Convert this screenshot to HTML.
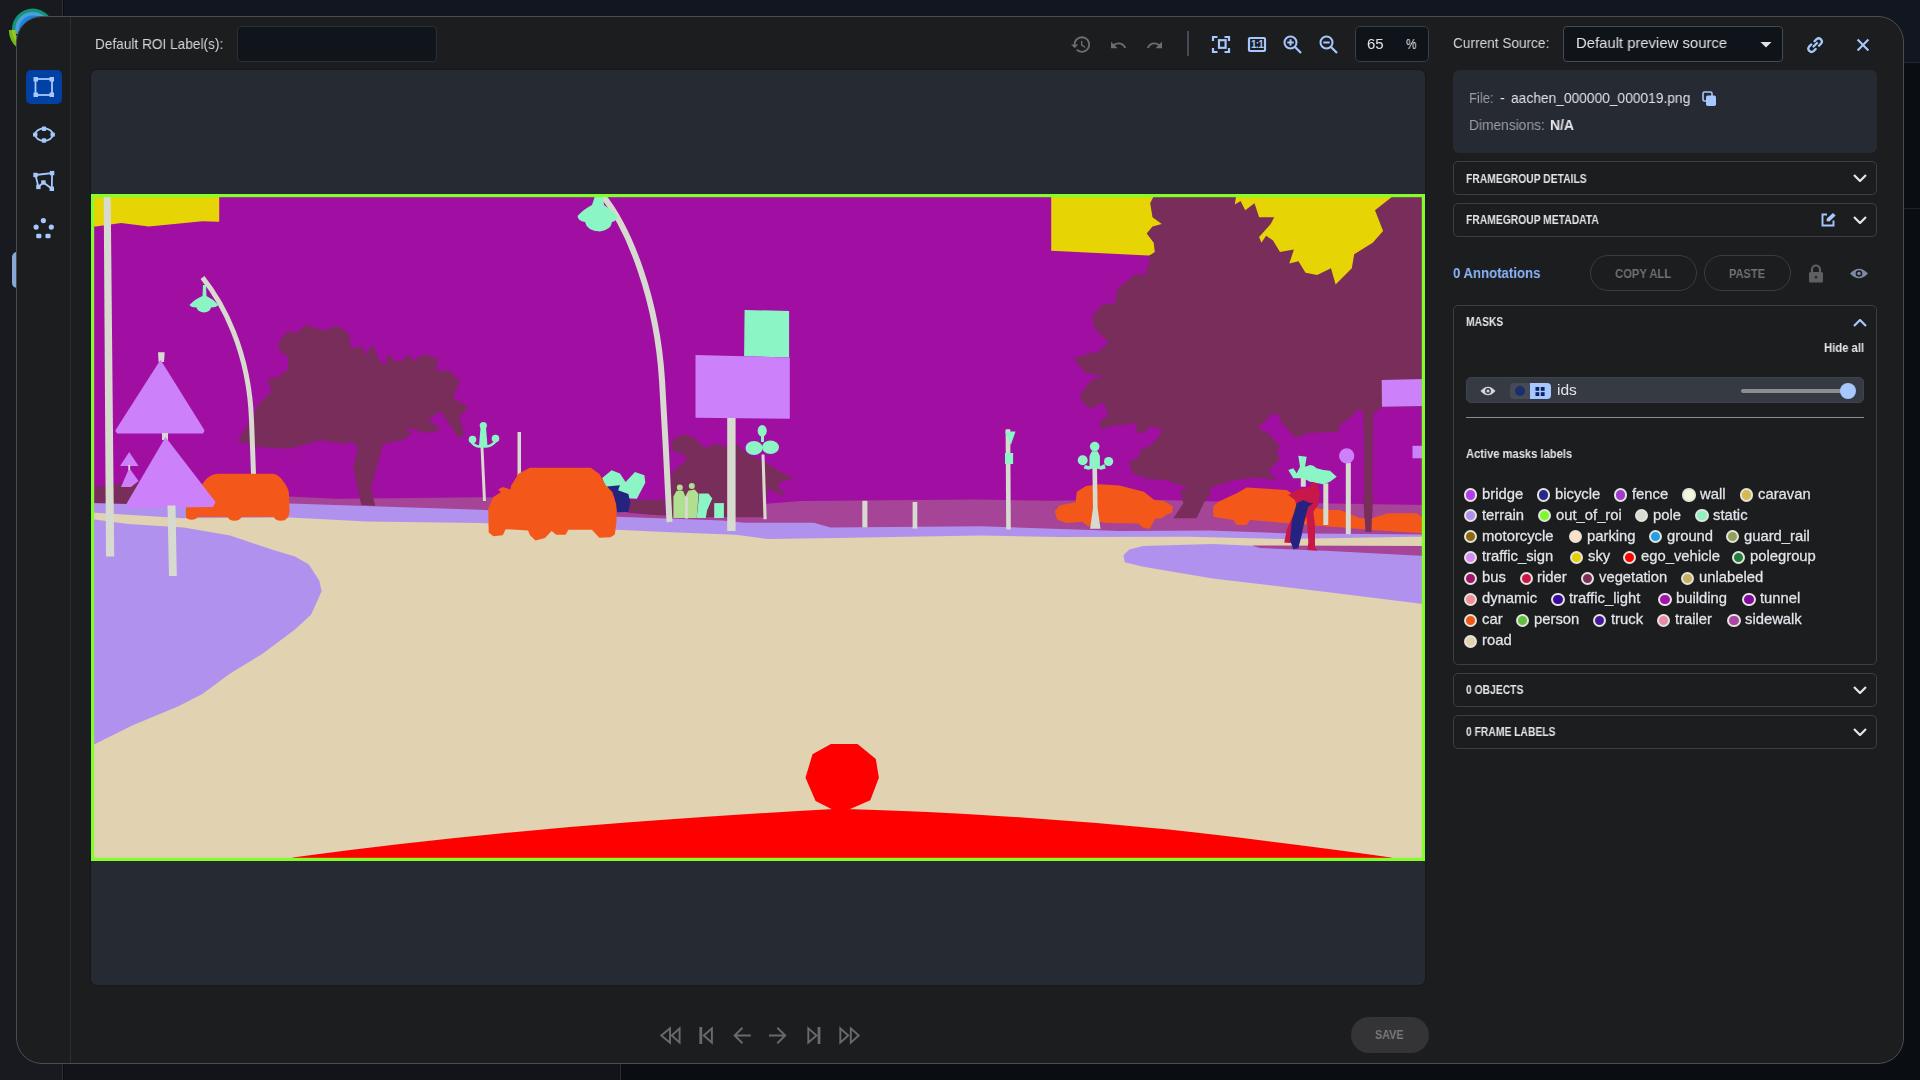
<!DOCTYPE html>
<html><head><meta charset="utf-8">
<style>
*{margin:0;padding:0;box-sizing:border-box}
html,body{width:1920px;height:1080px;overflow:hidden;background:#0a0d12;font-family:"Liberation Sans",sans-serif}
.abs{position:absolute}
#bgl{left:0;top:0;width:63px;height:1080px;background:#181a1f;border-right:1px solid #2a2d33}
#bgt{left:64px;top:0;width:1856px;height:63px;background:#121620;border-bottom:1px solid #23262d}
#bgb{left:64px;top:1064px;width:557px;height:16px;background:#121419;border-right:1px solid #2a2d33}
#bgr{left:1904px;top:208px;width:16px;height:1px;background:#1f2228}
#modal{left:16px;top:16px;width:1888px;height:1048px;background:#1c1d1f;border:1px solid #4a4c53;border-radius:26px;overflow:hidden}
.txt{white-space:nowrap;color:#d6d6d8;will-change:transform}
</style></head><body>
<div id="bgl" class="abs"></div>
<div id="bgt" class="abs"></div>
<div id="bgb" class="abs"></div>
<div id="bgr" class="abs"></div>
<svg class="abs" style="left:0;top:0" width="70" height="70" viewBox="0 0 70 70">
  <defs><clipPath id="lgtop"><rect x="0" y="0" width="70" height="34"/></clipPath></defs>
  <g clip-path="url(#lgtop)">
  <circle cx="32.8" cy="29.5" r="20.9" fill="#139478"/>
  <circle cx="32.8" cy="29.5" r="17.6" fill="#4aa0d8"/>
  <circle cx="32.8" cy="29.5" r="13.9" fill="#1a84e0"/>
  </g>
  <path d="M8.8 30 A24 24 0 0 0 16.7 47.3 L21 42.6 A17.6 17.6 0 0 1 15.2 30 Z" fill="#70ba1e"/>
  <path d="M11.9 30 A20.9 20.9 0 0 0 18.8 44.9 L21 42.6 A17.6 17.6 0 0 1 15.2 30 Z" fill="#9cc428"/>
</svg>
<div class="abs" style="left:12px;top:252px;width:6px;height:36px;background:#88a8d8;border-radius:5px 0 0 5px"></div>
<div id="modal" class="abs"></div>
<div class="abs" style="left:70px;top:17px;width:1px;height:1046px;background:#2c2e33"></div>
<div class="abs" style="left:26px;top:70px;width:36px;height:34px;background:#0041a3;border-radius:5px"></div>
<svg class="abs" style="left:26px;top:60px" width="36" height="200" viewBox="26 60 36 200">
<g fill="none" stroke="#a6c8ff" stroke-width="1.8">
<rect x="35.5" y="79" width="16.5" height="16"/>
<ellipse cx="44" cy="134.6" rx="8.8" ry="6.2"/>
<polyline points="35.5,175 52.1,173.1 51.8,188.8 43.4,182.5 38.4,186.9 35.5,175"/>
</g>
<g fill="#a6c8ff">
<rect x="33.5" y="77" width="4.5" height="4.5"/><rect x="49.5" y="77" width="4.5" height="4.5"/>
<rect x="33.5" y="92.5" width="4.5" height="4.5"/><rect x="49.5" y="92.5" width="4.5" height="4.5"/>
<rect x="41.8" y="126.5" width="4.4" height="4.4" rx="1"/><rect x="41.8" y="138.3" width="4.4" height="4.4" rx="1"/>
<rect x="33" y="132.4" width="4.4" height="4.4" rx="1"/><rect x="50.5" y="132.4" width="4.4" height="4.4" rx="1"/>
<rect x="33.3" y="172.8" width="4.4" height="4.4"/><rect x="49.9" y="170.9" width="4.4" height="4.4"/>
<rect x="49.6" y="186.6" width="4.4" height="4.4"/><rect x="41.2" y="180.3" width="4.4" height="4.4"/>
<rect x="36.2" y="184.7" width="4.4" height="4.4"/>
<circle cx="43.4" cy="220.6" r="2.6"/><circle cx="36.1" cy="227.1" r="2.6"/><circle cx="51.3" cy="227.1" r="2.6"/>
<rect x="36.2" y="233.7" width="5.2" height="4.6" rx="1.3"/><rect x="45.4" y="233.7" width="5.2" height="4.6" rx="1.3"/>
</g></svg>
<div class="abs txt" style="left:95.0px;top:36.0px;font-size:15px;line-height:15px;color:#d6d7da;font-weight:normal;transform:scaleX(0.91);transform-origin:0 0;">Default ROI Label(s):</div>
<div class="abs" style="left:237px;top:26px;width:200px;height:36px;background:#10141b;border:1px solid #2b2f37;border-radius:4px"></div>
<svg class="abs" style="left:1071px;top:35px" width="20" height="20" viewBox="1 3 22 19"><path fill="#6e6e70" d="M13 3c-4.97 0-9 4.03-9 9H1l3.89 3.89.07.14L9 12H6c0-3.87 3.13-7 7-7s7 3.13 7 7-3.13 7-7 7c-1.93 0-3.68-.79-4.94-2.06l-1.42 1.42C8.27 19.99 10.51 21 13 21c4.97 0 9-4.03 9-9s-4.03-9-9-9zm-1 5v5l4.28 2.54.72-1.21-3.5-2.08V8H12z"/></svg>
<svg class="abs" style="left:1110.5px;top:40.5px" width="15" height="8" viewBox="2 7 20.4 9"><path fill="#6e6e70" d="M12.5 8c-2.65 0-5.05.99-6.9 2.6L2 7v9h9l-3.62-3.62c1.39-1.16 3.16-1.88 5.12-1.88 3.54 0 6.55 2.31 7.6 5.5l2.37-.78C21.08 11.03 17.15 8 12.5 8z"/></svg>
<svg class="abs" style="left:1146.5px;top:40.5px" width="15" height="8" viewBox="1.54 7 20.46 9"><path fill="#6e6e70" d="M18.4 10.6C16.55 8.99 14.15 8 11.5 8c-4.65 0-8.58 3.03-9.96 7.22L3.9 16c1.05-3.19 4.05-5.5 7.6-5.5 1.95 0 3.73.72 5.12 1.88L13 16h9V7l-3.6 3.6z"/></svg>
<div class="abs" style="left:1187px;top:31px;width:2px;height:25px;background:#454b57"></div>
<svg class="abs" style="left:1210px;top:34px" width="22" height="21" viewBox="1210 34 22 21"><g fill="none" stroke="#a6c8ff" stroke-width="2.2">
<path d="M1213 41 V37 H1217.5"/><path d="M1224.5 37 H1229 V41"/><path d="M1229 48 V52 H1224.5"/><path d="M1217.5 52 H1213 V48"/>
<rect x="1219" y="40.2" width="6.6" height="7.6"/></g></svg>
<svg class="abs" style="left:1247px;top:36px" width="21" height="17" viewBox="1247 36 21 17"><rect x="1249" y="38" width="16" height="13" fill="none" stroke="#a6c8ff" stroke-width="2.2" rx="1"/>
<text x="1257" y="48.3" font-family="Liberation Sans" font-weight="bold" font-size="10" fill="#a6c8ff" text-anchor="middle" letter-spacing="-0.8">1:1</text></svg>
<svg class="abs" style="left:1280px;top:33px" width="22" height="22" viewBox="1280 33 22 22"><circle cx="1290.5" cy="42.5" r="6" fill="none" stroke="#a6c8ff" stroke-width="2"/><path d="M1294.8 46.8 L1301.0 53" stroke="#a6c8ff" stroke-width="2.2"/><path d="M1287.3 42.5 H1293.7" stroke="#a6c8ff" stroke-width="2"/><path d="M1290.5 39.3 V45.7" stroke="#a6c8ff" stroke-width="2"/></svg>
<svg class="abs" style="left:1316px;top:33px" width="22" height="22" viewBox="1316 33 22 22"><circle cx="1326.5" cy="42.5" r="6" fill="none" stroke="#a6c8ff" stroke-width="2"/><path d="M1330.8 46.8 L1337.0 53" stroke="#a6c8ff" stroke-width="2.2"/><path d="M1323.3 42.5 H1329.7" stroke="#a6c8ff" stroke-width="2"/></svg>
<div class="abs" style="left:1355px;top:26px;width:74px;height:36px;background:#0f131a;border:1px solid #3a3e46;border-radius:5px"></div>
<div class="abs txt" style="left:1366.5px;top:35.6px;font-size:15px;line-height:15px;color:#e2e3e6;font-weight:normal;">65</div>
<div class="abs txt" style="left:1405.5px;top:37.4px;font-size:14px;line-height:14px;color:#e2e3e6;font-weight:normal;transform:scaleX(0.85);transform-origin:0 0;">%</div>
<div class="abs txt" style="left:1453.0px;top:35.2px;font-size:15px;line-height:15px;color:#d6d7da;font-weight:normal;transform:scaleX(0.91);transform-origin:0 0;">Current Source:</div>
<div class="abs" style="left:1563px;top:26px;width:220px;height:36px;background:#0f131a;border:1px solid #474a52;border-radius:4px"></div>
<div class="abs txt" style="left:1575.5px;top:35.2px;font-size:15px;line-height:15px;color:#e2e3e6;font-weight:normal;transform:scaleX(0.99);transform-origin:0 0;">Default preview source</div>
<svg class="abs" style="left:1759px;top:41px" width="14" height="7" viewBox="0 0 14 7"><path d="M1.5 1 L12.5 1 L7 6.5 Z" fill="#e2e3e6"/></svg>
<svg class="abs" style="left:1805px;top:36px" width="20" height="18" viewBox="0 0 20 18"><g fill="none" stroke="#a6c8ff" stroke-width="2.3" stroke-linecap="round"><path d="M8.5 10.5 L12 7"/><path d="M9.5 5.2 L11.6 3.1 a3.2 3.2 0 0 1 4.5 4.5 L14 9.7"/><path d="M6.2 8.5 L4.1 10.6 a3.2 3.2 0 0 0 4.5 4.5 L10.7 13"/></g></svg>
<svg class="abs" style="left:1855px;top:37px" width="16" height="16" viewBox="0 0 16 16"><path d="M2.6 2.6 L13.4 13.4 M13.4 2.6 L2.6 13.4" stroke="#a6c8ff" stroke-width="2.1"/></svg>
<div class="abs" style="left:91px;top:70px;width:1334px;height:915px;background:#262a33;border-radius:6px;box-shadow:0 0 1px 1px #18191c"></div>
<div class="abs" style="left:1453px;top:70px;width:424px;height:83px;background:#262a33;border-radius:6px"></div>
<div class="abs txt" style="left:1469.0px;top:90.8px;font-size:14.5px;line-height:14.5px;color:#9c9ea3;font-weight:normal;transform:scaleX(0.9);transform-origin:0 0;">File:</div>
<div class="abs txt" style="left:1500.0px;top:90.8px;font-size:14.5px;line-height:14.5px;color:#e2e3e6;font-weight:normal;">-</div>
<div class="abs txt" style="left:1510.5px;top:90.8px;font-size:14.5px;line-height:14.5px;color:#e2e3e6;font-weight:normal;transform:scaleX(0.95);transform-origin:0 0;">aachen_000000_000019.png</div>
<svg class="abs" style="left:1701.5px;top:91px" width="15" height="16" viewBox="0 0 15 16"><rect x="1" y="1" width="9" height="9" rx="1.5" fill="none" stroke="#a6c8ff" stroke-width="1.6"/><rect x="4" y="4.5" width="10" height="10.5" rx="1.8" fill="#a6c8ff"/></svg>
<div class="abs txt" style="left:1469.0px;top:118.2px;font-size:14.5px;line-height:14.5px;color:#9c9ea3;font-weight:normal;transform:scaleX(0.95);transform-origin:0 0;">Dimensions:</div>
<div class="abs txt" style="left:1549.5px;top:118.2px;font-size:14.5px;line-height:14.5px;color:#e8e9ec;font-weight:bold;transform:scaleX(0.96);transform-origin:0 0;">N/A</div>
<div class="abs" style="left:1453px;top:161px;width:424px;height:34px;border:1px solid #3b3e45;border-radius:5px"></div>
<div class="abs txt" style="left:1466.0px;top:172.5px;font-size:12px;line-height:12px;color:#e4e5e8;font-weight:bold;transform:scaleX(0.86);transform-origin:0 0;">FRAMEGROUP DETAILS</div>
<svg class="abs" style="left:1853px;top:173.5px" width="14" height="8" viewBox="0 0 14 8"><path d="M1 1 L7 7 L13 1" fill="none" stroke="#e6e6e8" stroke-width="2.2"/></svg>
<div class="abs" style="left:1453px;top:203px;width:424px;height:34px;border:1px solid #3b3e45;border-radius:5px"></div>
<div class="abs txt" style="left:1466.0px;top:214.4px;font-size:12px;line-height:12px;color:#e4e5e8;font-weight:bold;transform:scaleX(0.86);transform-origin:0 0;">FRAMEGROUP METADATA</div>
<svg class="abs" style="left:1853px;top:215.5px" width="14" height="8" viewBox="0 0 14 8"><path d="M1 1 L7 7 L13 1" fill="none" stroke="#e6e6e8" stroke-width="2.2"/></svg>
<svg class="abs" style="left:1820px;top:212px" width="17" height="15" viewBox="0 0 17 15"><path d="M7 2.5 H2.5 V13.5 H13.5 V8.5" fill="none" stroke="#a6c8ff" stroke-width="1.9"/><path d="M6.5 9.3 L6.8 6.6 L13 0.9 L15.6 3.5 L9.4 9.6 Z" fill="#a6c8ff"/></svg>
<div class="abs txt" style="left:1453.0px;top:265.4px;font-size:15.5px;line-height:15.5px;color:#8ab4f8;font-weight:bold;transform:scaleX(0.85);transform-origin:0 0;">0 Annotations</div>
<div class="abs" style="left:1590px;top:255px;width:107px;height:36px;border:1px solid #3a3c41;border-radius:18px"></div>
<div class="abs txt" style="left:1615.0px;top:266.5px;font-size:13px;line-height:13px;color:#707174;font-weight:bold;transform:scaleX(0.865);transform-origin:0 0;">COPY ALL</div>
<div class="abs" style="left:1704px;top:255px;width:87px;height:36px;border:1px solid #3a3c41;border-radius:18px"></div>
<div class="abs txt" style="left:1728.7px;top:266.5px;font-size:13px;line-height:13px;color:#707174;font-weight:bold;transform:scaleX(0.85);transform-origin:0 0;">PASTE</div>
<svg class="abs" style="left:1808px;top:264px" width="16" height="19" viewBox="0 0 16 19"><path d="M4 8 V5.5 a4 4 0 0 1 8 0 V8" fill="none" stroke="#5f6064" stroke-width="2.2"/><rect x="1" y="8" width="14" height="10.5" rx="1.5" fill="#5f6064"/><circle cx="8" cy="13" r="1.5" fill="#2a2b2e"/></svg>
<svg class="abs" style="left:1849px;top:267px" width="20" height="13" viewBox="0 0 20 13"><path d="M1 6.5 Q10 -3 19 6.5 Q10 16 1 6.5 Z" fill="#7b8aa5"/><circle cx="10" cy="6.5" r="3.3" fill="#1c1d1f"/><circle cx="10" cy="6.5" r="1.8" fill="#7b8aa5"/></svg>
<div class="abs" style="left:1453px;top:305px;width:424px;height:360px;border:1px solid #3b3e45;border-radius:5px"></div>
<div class="abs txt" style="left:1466.0px;top:316.4px;font-size:12px;line-height:12px;color:#e4e5e8;font-weight:bold;transform:scaleX(0.86);transform-origin:0 0;">MASKS</div>
<svg class="abs" style="left:1853px;top:318.5px" width="14" height="8" viewBox="0 0 14 8"><path d="M1 7 L7 1 L13 7" fill="none" stroke="#a6c8ff" stroke-width="2.2"/></svg>
<div class="abs txt" style="left:1824.0px;top:342.3px;font-size:12px;line-height:12px;color:#e4e5e8;font-weight:bold;transform:scaleX(0.94);transform-origin:0 0;">Hide all</div>
<div class="abs" style="left:1466px;top:377px;width:398px;height:26px;background:#363a43;border-radius:5px;border:1px solid #3f434b"></div>
<svg class="abs" style="left:1480px;top:385px" width="16" height="12" viewBox="0 0 16 12"><path d="M0.5 6 Q8 -2.5 15.5 6 Q8 14.5 0.5 6 Z" fill="#d4d5d8"/><circle cx="8" cy="6" r="2.9" fill="#363a43"/><circle cx="8" cy="6" r="1.5" fill="#d4d5d8"/></svg>
<div class="abs" style="left:1510px;top:383px;width:41px;height:16px;background:#454a55;border-radius:4px"></div>
<div class="abs" style="left:1530px;top:383px;width:21px;height:16px;background:#a6c8ff;border-radius:0 4px 4px 0"></div>
<div class="abs" style="left:1514.8px;top:385.8px;width:10px;height:10px;background:#1a2e6e;border-radius:50%"></div>
<svg class="abs" style="left:1534px;top:386px" width="12" height="11" viewBox="0 0 12 11"><rect x="1.5" y="1" width="3.8" height="3.8" fill="#0b2363"/><rect x="6.8" y="1" width="3.8" height="3.8" fill="#0b2363"/><rect x="1.5" y="6.2" width="3.8" height="3.8" fill="#0b2363"/><rect x="6.8" y="6.2" width="3.8" height="3.8" fill="#0b2363"/></svg>
<div class="abs txt" style="left:1557.0px;top:382.0px;font-size:15.5px;line-height:15.5px;color:#e2e3e6;font-weight:normal;">ids</div>
<div class="abs" style="left:1741px;top:389px;width:107px;height:4px;background:#8c8e92;border-radius:2px"></div>
<div class="abs" style="left:1839.8px;top:382.8px;width:16px;height:16px;background:#a6c8ff;border-radius:50%"></div>
<div class="abs" style="left:1466px;top:417px;width:398px;height:1px;background:#8a8b8f"></div>
<div class="abs txt" style="left:1466.0px;top:448.2px;font-size:12px;line-height:12px;color:#e4e5e8;font-weight:bold;transform:scaleX(0.93);transform-origin:0 0;">Active masks labels</div>
<div class="abs" style="left:1464.2px;top:488.4px;width:13.2px;height:13.2px;border-radius:50%;background:#b43cf0;border:2px solid #e4e4dc"></div>
<div class="abs txt" style="left:1482.1px;top:486.8px;font-size:14.8px;line-height:14.8px;color:#e2e4ea;font-weight:normal;text-shadow:0 0 1px #000;-webkit-text-stroke:0.3px #e2e4ea;">bridge</div>
<div class="abs" style="left:1537.0px;top:488.4px;width:13.2px;height:13.2px;border-radius:50%;background:#28288c;border:2px solid #e4e4dc"></div>
<div class="abs txt" style="left:1554.9px;top:486.8px;font-size:14.8px;line-height:14.8px;color:#e2e4ea;font-weight:normal;text-shadow:0 0 1px #000;-webkit-text-stroke:0.3px #e2e4ea;">bicycle</div>
<div class="abs" style="left:1614.1px;top:488.4px;width:13.2px;height:13.2px;border-radius:50%;background:#a03ccc;border:2px solid #e4e4dc"></div>
<div class="abs txt" style="left:1632.0px;top:486.8px;font-size:14.8px;line-height:14.8px;color:#e2e4ea;font-weight:normal;text-shadow:0 0 1px #000;-webkit-text-stroke:0.3px #e2e4ea;">fence</div>
<div class="abs" style="left:1682.4px;top:488.4px;width:13.2px;height:13.2px;border-radius:50%;background:#f2f8da;border:2px solid #e4e4dc"></div>
<div class="abs txt" style="left:1700.3px;top:486.8px;font-size:14.8px;line-height:14.8px;color:#e2e4ea;font-weight:normal;text-shadow:0 0 1px #000;-webkit-text-stroke:0.3px #e2e4ea;">wall</div>
<div class="abs" style="left:1740.2px;top:488.4px;width:13.2px;height:13.2px;border-radius:50%;background:#d8b850;border:2px solid #e4e4dc"></div>
<div class="abs txt" style="left:1758.1px;top:486.8px;font-size:14.8px;line-height:14.8px;color:#e2e4ea;font-weight:normal;text-shadow:0 0 1px #000;-webkit-text-stroke:0.3px #e2e4ea;">caravan</div>
<div class="abs" style="left:1464.2px;top:509.3px;width:13.2px;height:13.2px;border-radius:50%;background:#b090ee;border:2px solid #e4e4dc"></div>
<div class="abs txt" style="left:1482.1px;top:507.7px;font-size:14.8px;line-height:14.8px;color:#e2e4ea;font-weight:normal;text-shadow:0 0 1px #000;-webkit-text-stroke:0.3px #e2e4ea;">terrain</div>
<div class="abs" style="left:1538.1px;top:509.3px;width:13.2px;height:13.2px;border-radius:50%;background:#7cf82c;border:2px solid #e4e4dc"></div>
<div class="abs txt" style="left:1556.0px;top:507.7px;font-size:14.8px;line-height:14.8px;color:#e2e4ea;font-weight:normal;text-shadow:0 0 1px #000;-webkit-text-stroke:0.3px #e2e4ea;">out_of_roi</div>
<div class="abs" style="left:1635.3px;top:509.3px;width:13.2px;height:13.2px;border-radius:50%;background:#d8dcd2;border:2px solid #e4e4dc"></div>
<div class="abs txt" style="left:1653.2px;top:507.7px;font-size:14.8px;line-height:14.8px;color:#e2e4ea;font-weight:normal;text-shadow:0 0 1px #000;-webkit-text-stroke:0.3px #e2e4ea;">pole</div>
<div class="abs" style="left:1695.4px;top:509.3px;width:13.2px;height:13.2px;border-radius:50%;background:#8ef2c0;border:2px solid #e4e4dc"></div>
<div class="abs txt" style="left:1713.3px;top:507.7px;font-size:14.8px;line-height:14.8px;color:#e2e4ea;font-weight:normal;text-shadow:0 0 1px #000;-webkit-text-stroke:0.3px #e2e4ea;">static</div>
<div class="abs" style="left:1464.2px;top:530.1px;width:13.2px;height:13.2px;border-radius:50%;background:#8c6810;border:2px solid #e4e4dc"></div>
<div class="abs txt" style="left:1482.1px;top:528.5px;font-size:14.8px;line-height:14.8px;color:#e2e4ea;font-weight:normal;text-shadow:0 0 1px #000;-webkit-text-stroke:0.3px #e2e4ea;">motorcycle</div>
<div class="abs" style="left:1569.3px;top:530.1px;width:13.2px;height:13.2px;border-radius:50%;background:#ffe0c4;border:2px solid #e4e4dc"></div>
<div class="abs txt" style="left:1587.2px;top:528.5px;font-size:14.8px;line-height:14.8px;color:#e2e4ea;font-weight:normal;text-shadow:0 0 1px #000;-webkit-text-stroke:0.3px #e2e4ea;">parking</div>
<div class="abs" style="left:1649.0px;top:530.1px;width:13.2px;height:13.2px;border-radius:50%;background:#209ee8;border:2px solid #e4e4dc"></div>
<div class="abs txt" style="left:1666.9px;top:528.5px;font-size:14.8px;line-height:14.8px;color:#e2e4ea;font-weight:normal;text-shadow:0 0 1px #000;-webkit-text-stroke:0.3px #e2e4ea;">ground</div>
<div class="abs" style="left:1726.3px;top:530.1px;width:13.2px;height:13.2px;border-radius:50%;background:#8ea25a;border:2px solid #e4e4dc"></div>
<div class="abs txt" style="left:1744.2px;top:528.5px;font-size:14.8px;line-height:14.8px;color:#e2e4ea;font-weight:normal;text-shadow:0 0 1px #000;-webkit-text-stroke:0.3px #e2e4ea;">guard_rail</div>
<div class="abs" style="left:1464.2px;top:550.9px;width:13.2px;height:13.2px;border-radius:50%;background:#d38cf8;border:2px solid #e4e4dc"></div>
<div class="abs txt" style="left:1482.1px;top:549.3px;font-size:14.8px;line-height:14.8px;color:#e2e4ea;font-weight:normal;text-shadow:0 0 1px #000;-webkit-text-stroke:0.3px #e2e4ea;">traffic_sign</div>
<div class="abs" style="left:1570.2px;top:550.9px;width:13.2px;height:13.2px;border-radius:50%;background:#e6d000;border:2px solid #e4e4dc"></div>
<div class="abs txt" style="left:1588.1px;top:549.3px;font-size:14.8px;line-height:14.8px;color:#e2e4ea;font-weight:normal;text-shadow:0 0 1px #000;-webkit-text-stroke:0.3px #e2e4ea;">sky</div>
<div class="abs" style="left:1623.0px;top:550.9px;width:13.2px;height:13.2px;border-radius:50%;background:#ff0000;border:2px solid #e4e4dc"></div>
<div class="abs txt" style="left:1640.9px;top:549.3px;font-size:14.8px;line-height:14.8px;color:#e2e4ea;font-weight:normal;text-shadow:0 0 1px #000;-webkit-text-stroke:0.3px #e2e4ea;">ego_vehicle</div>
<div class="abs" style="left:1732.3px;top:550.9px;width:13.2px;height:13.2px;border-radius:50%;background:#1e7e3a;border:2px solid #e4e4dc"></div>
<div class="abs txt" style="left:1750.2px;top:549.3px;font-size:14.8px;line-height:14.8px;color:#e2e4ea;font-weight:normal;text-shadow:0 0 1px #000;-webkit-text-stroke:0.3px #e2e4ea;">polegroup</div>
<div class="abs" style="left:1464.2px;top:571.9px;width:13.2px;height:13.2px;border-radius:50%;background:#a0146e;border:2px solid #e4e4dc"></div>
<div class="abs txt" style="left:1482.1px;top:570.3px;font-size:14.8px;line-height:14.8px;color:#e2e4ea;font-weight:normal;text-shadow:0 0 1px #000;-webkit-text-stroke:0.3px #e2e4ea;">bus</div>
<div class="abs" style="left:1519.5px;top:571.9px;width:13.2px;height:13.2px;border-radius:50%;background:#cc164a;border:2px solid #e4e4dc"></div>
<div class="abs txt" style="left:1537.4px;top:570.3px;font-size:14.8px;line-height:14.8px;color:#e2e4ea;font-weight:normal;text-shadow:0 0 1px #000;-webkit-text-stroke:0.3px #e2e4ea;">rider</div>
<div class="abs" style="left:1581.1px;top:571.9px;width:13.2px;height:13.2px;border-radius:50%;background:#7c3058;border:2px solid #e4e4dc"></div>
<div class="abs txt" style="left:1599.0px;top:570.3px;font-size:14.8px;line-height:14.8px;color:#e2e4ea;font-weight:normal;text-shadow:0 0 1px #000;-webkit-text-stroke:0.3px #e2e4ea;">vegetation</div>
<div class="abs" style="left:1680.8px;top:571.9px;width:13.2px;height:13.2px;border-radius:50%;background:#c8ae5e;border:2px solid #e4e4dc"></div>
<div class="abs txt" style="left:1698.7px;top:570.3px;font-size:14.8px;line-height:14.8px;color:#e2e4ea;font-weight:normal;text-shadow:0 0 1px #000;-webkit-text-stroke:0.3px #e2e4ea;">unlabeled</div>
<div class="abs" style="left:1464.2px;top:592.9px;width:13.2px;height:13.2px;border-radius:50%;background:#f48c9a;border:2px solid #e4e4dc"></div>
<div class="abs txt" style="left:1482.1px;top:591.3px;font-size:14.8px;line-height:14.8px;color:#e2e4ea;font-weight:normal;text-shadow:0 0 1px #000;-webkit-text-stroke:0.3px #e2e4ea;">dynamic</div>
<div class="abs" style="left:1551.4px;top:592.9px;width:13.2px;height:13.2px;border-radius:50%;background:#3a0aa0;border:2px solid #e4e4dc"></div>
<div class="abs txt" style="left:1569.3px;top:591.3px;font-size:14.8px;line-height:14.8px;color:#e2e4ea;font-weight:normal;text-shadow:0 0 1px #000;-webkit-text-stroke:0.3px #e2e4ea;">traffic_light</div>
<div class="abs" style="left:1658.4px;top:592.9px;width:13.2px;height:13.2px;border-radius:50%;background:#a412b0;border:2px solid #e4e4dc"></div>
<div class="abs txt" style="left:1676.3px;top:591.3px;font-size:14.8px;line-height:14.8px;color:#e2e4ea;font-weight:normal;text-shadow:0 0 1px #000;-webkit-text-stroke:0.3px #e2e4ea;">building</div>
<div class="abs" style="left:1742.4px;top:592.9px;width:13.2px;height:13.2px;border-radius:50%;background:#800aa0;border:2px solid #e4e4dc"></div>
<div class="abs txt" style="left:1760.3px;top:591.3px;font-size:14.8px;line-height:14.8px;color:#e2e4ea;font-weight:normal;text-shadow:0 0 1px #000;-webkit-text-stroke:0.3px #e2e4ea;">tunnel</div>
<div class="abs" style="left:1464.2px;top:614.0px;width:13.2px;height:13.2px;border-radius:50%;background:#f05614;border:2px solid #e4e4dc"></div>
<div class="abs txt" style="left:1482.1px;top:612.4px;font-size:14.8px;line-height:14.8px;color:#e2e4ea;font-weight:normal;text-shadow:0 0 1px #000;-webkit-text-stroke:0.3px #e2e4ea;">car</div>
<div class="abs" style="left:1516.2px;top:614.0px;width:13.2px;height:13.2px;border-radius:50%;background:#62c040;border:2px solid #e4e4dc"></div>
<div class="abs txt" style="left:1534.1px;top:612.4px;font-size:14.8px;line-height:14.8px;color:#e2e4ea;font-weight:normal;text-shadow:0 0 1px #000;-webkit-text-stroke:0.3px #e2e4ea;">person</div>
<div class="abs" style="left:1593.0px;top:614.0px;width:13.2px;height:13.2px;border-radius:50%;background:#46189e;border:2px solid #e4e4dc"></div>
<div class="abs txt" style="left:1610.9px;top:612.4px;font-size:14.8px;line-height:14.8px;color:#e2e4ea;font-weight:normal;text-shadow:0 0 1px #000;-webkit-text-stroke:0.3px #e2e4ea;">truck</div>
<div class="abs" style="left:1657.3px;top:614.0px;width:13.2px;height:13.2px;border-radius:50%;background:#e88aa8;border:2px solid #e4e4dc"></div>
<div class="abs txt" style="left:1675.2px;top:612.4px;font-size:14.8px;line-height:14.8px;color:#e2e4ea;font-weight:normal;text-shadow:0 0 1px #000;-webkit-text-stroke:0.3px #e2e4ea;">trailer</div>
<div class="abs" style="left:1727.4px;top:614.0px;width:13.2px;height:13.2px;border-radius:50%;background:#ae44a4;border:2px solid #e4e4dc"></div>
<div class="abs txt" style="left:1745.3px;top:612.4px;font-size:14.8px;line-height:14.8px;color:#e2e4ea;font-weight:normal;text-shadow:0 0 1px #000;-webkit-text-stroke:0.3px #e2e4ea;">sidewalk</div>
<div class="abs" style="left:1464.2px;top:634.7px;width:13.2px;height:13.2px;border-radius:50%;background:#e2d2b0;border:2px solid #e4e4dc"></div>
<div class="abs txt" style="left:1482.1px;top:633.1px;font-size:14.8px;line-height:14.8px;color:#e2e4ea;font-weight:normal;text-shadow:0 0 1px #000;-webkit-text-stroke:0.3px #e2e4ea;">road</div>
<div class="abs" style="left:1453px;top:673px;width:424px;height:34px;border:1px solid #3b3e45;border-radius:5px"></div>
<div class="abs txt" style="left:1466.0px;top:684.3px;font-size:12px;line-height:12px;color:#e4e5e8;font-weight:bold;transform:scaleX(0.86);transform-origin:0 0;">0 OBJECTS</div>
<svg class="abs" style="left:1853px;top:686px" width="14" height="8" viewBox="0 0 14 8"><path d="M1 1 L7 7 L13 1" fill="none" stroke="#e6e6e8" stroke-width="2.2"/></svg>
<div class="abs" style="left:1453px;top:715px;width:424px;height:34px;border:1px solid #3b3e45;border-radius:5px"></div>
<div class="abs txt" style="left:1466.0px;top:726.3px;font-size:12px;line-height:12px;color:#e4e5e8;font-weight:bold;transform:scaleX(0.86);transform-origin:0 0;">0 FRAME LABELS</div>
<svg class="abs" style="left:1853px;top:728px" width="14" height="8" viewBox="0 0 14 8"><path d="M1 1 L7 7 L13 1" fill="none" stroke="#e6e6e8" stroke-width="2.2"/></svg>
<svg class="abs" style="left:650px;top:1020px" width="220" height="32" viewBox="650 1020 220 32"><g fill="none" stroke="#6a6a6c" stroke-width="1.9" stroke-linejoin="miter">
<path d="M661.3 1035.5 L670 1028.3 V1042.7 Z"/><path d="M671.8 1035.5 L679.6 1028.3 V1042.7 Z"/>
<path d="M703.8 1035.5 L711.9 1028.3 V1042.7 Z"/>
<path d="M750.8 1035.5 H735 M742.5 1027.8 L734.6 1035.5 L742.5 1043.2"/>
<path d="M769 1035.5 H784.8 M777.3 1027.8 L785.2 1035.5 L777.3 1043.2"/>
<path d="M816.4 1035.5 L808.3 1028.3 V1042.7 Z"/>
<path d="M848.2 1035.5 L840.3 1028.3 V1042.7 Z"/><path d="M858.7 1035.5 L850.8 1028.3 V1042.7 Z"/>
</g>
<rect x="699.4" y="1027" width="2.8" height="17" fill="#6a6a6c"/><rect x="817.6" y="1027" width="2.8" height="17" fill="#6a6a6c"/></svg>
<div class="abs" style="left:1351px;top:1017px;width:78px;height:36px;background:#343436;border-radius:18px"></div>
<div class="abs txt" style="left:1374.5px;top:1028.3px;font-size:13px;line-height:13px;color:#7a7a7c;font-weight:bold;transform:scaleX(0.83);transform-origin:0 0;">SAVE</div>
<svg class="abs" style="left:0;top:0" width="1920" height="1080" viewBox="0 0 1920 1080"><defs><clipPath id="imgclip"><rect x="91" y="194" width="1334" height="667"/></clipPath></defs><g clip-path="url(#imgclip)">
<rect x="91" y="194" width="1334" height="667" fill="#a10ea2"/>
<polygon points="91.0,194.0 219.2,194.0 219.2,221.8 202.3,221.3 148.9,226.4 121.1,223.0 95.6,226.4 91.0,226.4" fill="#e6d405"/>
<polygon points="1051.2,194.0 1166.4,194.0 1166.4,247.3 1157.1,255.4 1147.9,255.4 1051.2,250.8" fill="#e6d405"/>
<polygon points="1154.8,194.0 1426.0,194.0 1426.0,379.4 1421.7,406.7 1381.7,406.7 1376.7,411.7 1373.3,413.3 1371.7,528.3 1365.0,530.0 1363.3,413.3 1361.7,410.8 1356.7,410.0 1353.3,415.0 1340.0,425.0 1338.3,431.7 1306.7,433.3 1296.7,438.3 1281.7,423.3 1280.0,415.8 1273.3,413.3 1258.3,427.5 1270.0,435.0 1280.0,446.7 1276.7,451.7 1280.0,458.3 1268.3,471.7 1276.7,480.0 1258.3,477.5 1233.3,480.0 1210.0,488.3 1210.0,495.2 1205.3,499.9 1197.2,518.4 1172.8,517.2 1177.5,514.9 1183.3,503.3 1185.6,487.1 1165.9,480.2 1148.5,479.0 1132.3,473.2 1128.9,461.7 1138.1,458.2 1140.4,450.1 1150.9,445.5 1160.1,435.0 1161.3,428.1 1148.5,426.9 1145.1,432.7 1137.0,432.7 1135.8,423.5 1112.7,425.8 1101.1,429.3 1099.9,420.0 1108.5,416.5 1103.8,402.6 1089.9,408.4 1080.7,400.3 1080.7,393.3 1092.3,379.4 1103.8,377.1 1085.3,372.5 1073.7,358.6 1087.6,353.9 1099.2,351.6 1108.5,342.3 1094.6,328.4 1092.3,316.8 1101.5,305.3 1115.4,302.9 1116.6,291.3 1120.1,286.7 1125.9,282.1 1134.0,275.1 1147.9,274.0 1145.6,268.2 1150.2,263.5 1147.9,256.6 1154.8,251.9 1153.7,242.7 1146.7,233.4 1152.5,226.4 1161.8,224.1 1152.5,217.2 1150.2,203.3" fill="#782d5a"/>
<polygon points="1235.9,194.0 1235.9,197.5 1234.8,204.4 1240.6,201.0 1245.2,210.2 1254.5,203.3 1259.1,217.2 1274.2,217.2 1270.7,224.1 1259.1,236.9 1261.4,242.7 1266.1,235.7 1273.0,240.4 1280.0,251.9 1293.9,249.6 1289.3,263.5 1298.5,261.2 1305.5,272.8 1317.1,275.1 1331.0,268.2 1335.6,284.4 1351.8,268.2 1354.2,254.3 1372.7,242.7 1383.1,231.1 1375.0,210.2 1391.2,197.5 1393.6,194.0" fill="#e6d405"/>
<polygon points="257.9,404.9 271.8,391.0 267.1,379.4 278.7,377.1 283.4,372.5 288.0,370.1 288.0,356.2 279.9,351.6 278.7,342.3 288.0,330.7 295.0,333.1 299.6,330.7 301.9,328.4 305.4,325.0 325.1,330.7 335.5,326.1 340.2,327.3 349.4,334.2 350.6,348.1 363.3,347.0 364.5,356.2 372.6,344.7 379.6,360.9 385.3,365.5 387.7,353.9 394.6,360.9 402.7,360.9 408.5,353.9 413.2,360.9 424.8,353.9 438.7,359.7 435.2,370.1 450.2,371.3 459.5,381.7 452.6,398.0 468.8,407.2 459.5,416.5 464.2,435.0 458.1,437.8 440.9,411.2 428.4,419.1 440.9,430.0 426.9,433.1 405.0,426.9 411.2,433.1 405.0,439.4 383.1,444.1 370.6,489.4 375.3,505.8 361.2,505.0 353.4,467.5 358.1,447.2 351.9,441.7 344.1,444.1 320.6,440.2 289.4,448.8 261.2,447.2 237.8,440.9 245.6,428.4 253.4,415.9" fill="#782d5a"/>
<polygon points="91.0,503.0 200.0,500.0 289.0,496.4 336.0,498.8 414.0,498.0 480.0,497.2 600.0,498.0 629.0,513.0 663.0,515.0 700.0,518.0 766.7,503.7 800.4,501.1 976.4,499.6 1050.5,500.8 1143.2,499.6 1236.0,502.0 1425.0,505.0 1425.0,861.0 91.0,861.0" fill="#a64497"/>
<polygon points="670.8,449.3 673.4,438.9 683.7,434.4 694.1,437.6 704.5,448.0 716.1,444.1 725.2,446.7 736.9,444.1 747.3,454.5 761.5,459.6 777.1,470.0 793.9,478.4 784.9,480.4 777.1,484.3 785.5,497.2 768.0,488.2 764.1,517.3 670.8,517.3 670.8,472.6 674.7,472.6 675.9,467.4 682.4,464.8 687.6,457.1" fill="#782d5a"/>
<polygon points="358.0,490.0 371.0,490.0 375.3,505.8 361.3,505.0" fill="#782d5a"/>
<polygon points="1173.4,518.2 1196.6,518.2 1205.2,499.9 1210.0,495.2 1210.0,490.0 1180.0,490.0 1183.3,503.3" fill="#782d5a"/>
<polygon points="1363.3,495.0 1373.0,495.0 1371.7,528.3 1365.0,530.0" fill="#782d5a"/>
<polygon points="94.5,486.9 114.2,484.6 137.4,481.1 137.4,505.4 94.5,505.4" fill="#782d5a"/>
<polygon points="629.4,500.6 650.0,499.7 665.0,499.5 665.0,515.6 650.0,514.7 629.4,511.9" fill="#782d5a"/>
<polygon points="91.0,503.1 183.7,505.4 289.4,503.4 480.0,509.7 616.3,516.7 722.6,520.6 744.6,522.8 814.1,522.8 830.3,527.4 981.0,526.3 1120.1,530.9 1210.0,530.5 1282.3,533.2 1425.0,534.4 1425.0,861.0 91.0,861.0" fill="#b092ee"/>
<polygon points="91.0,512.4 183.7,518.2 289.4,517.5 367.5,521.4 480.0,523.0 616.3,529.7 670.8,532.3 735.6,534.8 767.8,539.0 837.3,537.9 906.8,536.7 981.0,535.5 1059.4,536.9 1189.6,536.7 1282.3,539.0 1414.4,536.7 1425.0,536.7 1425.0,861.0 91.0,861.0" fill="#e1d2b1"/>
<polygon points="91.0,519.0 128.1,524.0 183.7,527.4 230.1,535.5 271.8,549.5 295.0,556.4 308.9,564.5 319.3,580.7 321.6,591.2 311.2,614.4 295.0,629.4 262.5,653.8 230.1,673.5 202.3,694.1 177.9,706.5 132.7,725.3 91.0,746.0" fill="#b092ee"/>
<polygon points="1123.5,555.3 1129.3,549.5 1143.2,546.0 1212.8,544.1 1259.1,546.0 1421.4,555.3 1426.0,555.3 1426.0,604.4 1328.7,592.3 1212.8,578.4 1143.2,566.8 1124.7,562.2" fill="#b092ee"/>
<polygon points="1252.0,545.5 1425.0,546.0 1425.0,556.0 1330.0,551.0 1260.0,548.0" fill="#a64497"/>
<polygon points="103.7,197.0 110.7,197.0 114.2,556.4 106.0,556.4" fill="#d7dacf"/>
<path d="M202.5,277.5 C222,302 249,350 251.5,420 L253.5,474" fill="none" stroke="#d7dacf" stroke-width="5"/>
<path d="M603,196 C630,230 657,300 662,380 C665,430 667,470 669.5,522" fill="none" stroke="#d7dacf" stroke-width="6"/>
<path d="M203,285 L206,285 L206.5,296 Q213,299 218.5,305 Q216,307.5 211,307.5 Q210,312 204,312.5 Q198,312 196.5,307.5 Q191,307.5 189.5,305 Q195,299 202.5,296 Z" fill="#8cf5c6"/>
<path d="M595,196 L603,196 L604,205 Q612,210 617.5,216 Q617,221 612,222 Q611,230 600,231.5 Q587,231 585,222 Q578,221 577.5,216 Q584,209 592,205 Z" fill="#8cf5c6"/>
<polygon points="744.6,309.9 789.1,311.0 789.1,357.4 744.1,356.2" fill="#8cf5c6"/>
<polygon points="695.5,355.1 789.8,357.4 789.8,418.8 695.5,417.7" fill="#cc80fa"/>
<polygon points="727.2,418.0 735.6,418.0 735.6,531.0 727.2,531.0" fill="#d7dacf"/>
<polygon points="761.5,454.5 764.5,454.5 766.7,519.3 763.5,519.3" fill="#d7dacf"/>
<ellipse cx="762.2" cy="430.8" rx="4.6" ry="5.8" fill="#8cf5c6"/><rect x="761" y="434" width="3" height="8" fill="#8cf5c6"/><ellipse cx="754" cy="448" rx="8.5" ry="7" fill="#8cf5c6"/><ellipse cx="770.5" cy="447.3" rx="8.5" ry="6.8" fill="#8cf5c6"/>
<polygon points="158.0,352.3 164.7,352.3 164.0,362.0 158.6,362.0" fill="#d7dacf"/>
<polygon points="160.5,359.7 204.6,430.6 203.0,433.5 117.0,433.5 115.3,430.6" fill="#cc80fa"/>
<polygon points="162.0,433.0 168.0,433.0 168.0,440.0 162.0,440.0" fill="#d7dacf"/>
<path d="M185.9,505.5 L204.4,481.2 Q210,474 218.3,473.8 L273.9,473.8 Q280,476 283.1,481.2 Q288,487 288.9,492.8 L289.6,511.3 Q289,520.8 281,520.8 Q275,520.6 273.9,517.1 L241.5,517.1 Q240,520.8 234.5,520.8 Q229,520.8 227.6,517.1 L197.5,517.1 Q196,519.8 191.7,519.8 Q187,519.6 185.9,517.1 Z" fill="#f3581a"/>
<polygon points="165.5,437.0 215.5,502.0 213.0,507.0 128.0,508.0 125.8,505.0" fill="#cc80fa"/>
<polygon points="167.5,505.4 175.5,505.4 176.8,576.1 169.0,576.1" fill="#d7dacf"/>
<polygon points="129.2,452.1 138.5,466.0 120.0,466.0" fill="#cc80fa"/>
<polygon points="129.2,468.0 138.5,481.0 131.0,486.9 121.0,486.9" fill="#cc80fa"/>
<polygon points="128.3,465.0 130.1,465.0 130.1,470.0 128.3,470.0" fill="#d7dacf"/>
<polygon points="480.4,444.0 483.3,444.0 486.0,501.0 483.0,501.0" fill="#d7dacf"/>
<circle cx="483.3" cy="425.5" r="3.6" fill="#8cf5c6"/>
<circle cx="472.5" cy="439.5" r="3.8" fill="#8cf5c6"/>
<circle cx="495.5" cy="438.5" r="3.8" fill="#8cf5c6"/>
<polygon points="480.5,428.0 486.0,428.0 487.5,446.0 479.0,446.0" fill="#8cf5c6"/>
<path d="M471.5,442 Q476,448 483,446 Q490,448 496,441" fill="none" stroke="#8cf5c6" stroke-width="2.6"/>
<polygon points="517.5,432.0 521.0,432.0 521.0,476.0 517.5,476.0" fill="#d7dacf"/>
<polygon points="602.2,478.1 611.6,470.2 620.0,473.4 625.6,481.9 635.0,472.0 644.4,475.3 645.3,482.8 636.9,498.8 620.0,498.0 607.0,490.0" fill="#8cf5c6"/>
<polygon points="606.9,486.6 620.0,485.2 618.1,490.3 628.4,494.1 630.3,502.5 628.4,511.9 617.2,512.3 614.4,496.9" fill="#242480"/>
<polygon points="488.3,508.1 493.4,496.9 500.9,492.2 498.1,489.4 502.8,487.0 510.3,489.4 511.2,485.6 518.7,473.4 530.0,467.8 590.9,467.8 599.4,473.9 605.9,485.6 612.5,492.2 616.2,504.4 616.7,520.3 614.8,534.4 610.6,537.2 599.4,537.7 591.9,529.7 568.4,529.7 565.6,534.8 556.2,534.8 551.6,531.1 545.0,538.1 535.6,540.5 530.0,535.3 528.1,530.6 505.6,529.2 502.8,535.3 493.4,536.2 488.7,532.5" fill="#f3581a"/>
<polygon points="699.3,493.4 708.4,493.4 712.3,498.5 707.1,510.2 705.8,518.0 696.7,518.0" fill="#8cf5c6"/>
<polygon points="714.2,503.1 723.9,503.1 723.9,518.0 714.2,518.0" fill="#8cf5c6"/>
<polygon points="673.4,496.6 676.6,490.8 683.1,490.8 685.3,496.6 688.3,490.8 694.7,489.5 698.6,494.0 696.7,518.0 673.4,518.0" fill="#afdf8f"/>
<circle cx="679.8" cy="487.5" r="3" fill="#afdf8f"/><circle cx="691.8" cy="486" r="3" fill="#afdf8f"/>
<polygon points="685.0,496.6 687.9,496.6 687.9,518.6 685.0,518.6" fill="#d7dacf"/>
<polygon points="862.3,500.8 867.4,500.8 867.4,527.4 862.3,527.4" fill="#d7dacf"/>
<polygon points="912.6,502.0 917.3,502.0 917.3,528.6 912.6,528.6" fill="#d7dacf"/>
<polygon points="1005.6,429.3 1010.3,429.3 1010.8,529.4 1006.2,529.4" fill="#d7dacf"/>
<polygon points="1005.0,431.6 1015.5,431.6 1010.8,444.9" fill="#8cf5c6"/>
<polygon points="1005.0,453.0 1013.1,453.0 1013.1,464.0 1005.0,464.0" fill="#8cf5c6"/>
<polygon points="1054.8,511.4 1059.4,505.6 1075.6,502.2 1076.8,491.8 1086.1,486.0 1099.9,484.2 1119.6,485.4 1143.9,491.8 1154.3,499.9 1163.6,501.0 1172.8,506.2 1172.3,512.6 1165.9,514.9 1161.3,518.4 1155.5,518.4 1149.7,528.8 1143.9,528.2 1138.1,523.6 1105.7,523.0 1099.9,521.8 1088.4,526.5 1082.6,521.8 1066.4,523.0 1057.1,519.5" fill="#f3581a"/>
<polygon points="1092.4,467.4 1097.0,467.4 1097.6,508.0 1100.5,528.8 1090.1,528.8 1093.0,508.0" fill="#d7dacf"/>
<circle cx="1094.7" cy="446.6" r="4.8" fill="#8cf5c6"/>
<circle cx="1082.7" cy="460.2" r="5" fill="#8cf5c6"/>
<circle cx="1108.6" cy="461.5" r="4.6" fill="#8cf5c6"/>
<polygon points="1091.8,451.2 1097.6,451.2 1099.9,455.9 1099.9,466.3 1104.6,464.0 1105.7,468.6 1101.1,469.8 1097.0,468.6 1092.4,468.6 1088.4,469.8 1083.7,468.6 1084.9,465.1 1089.5,466.3 1089.5,455.9" fill="#8cf5c6"/>
<polygon points="1213.3,506.7 1218.3,501.7 1236.7,493.3 1246.7,487.5 1286.7,490.0 1296.7,496.7 1316.7,508.3 1340.0,511.7 1360.0,518.3 1361.7,526.7 1330.0,526.7 1250.0,520.0 1246.7,525.0 1236.7,525.0 1233.3,520.0 1213.3,516.7" fill="#f3581a"/>
<polygon points="1313.3,510.0 1340.0,510.0 1360.0,518.3 1371.7,518.3 1388.3,513.3 1416.7,513.3 1423.3,518.3 1423.3,533.3 1371.7,530.0 1313.3,525.0" fill="#f3581a"/>
<polygon points="1363.5,495.0 1372.5,495.0 1371.5,532.0 1365.5,532.0" fill="#782d5a"/>
<polygon points="1300.8,473.3 1305.8,473.3 1305.8,486.7 1300.8,486.7" fill="#d7dacf"/>
<polygon points="1323.3,483.3 1328.3,483.3 1328.3,525.0 1323.3,525.0" fill="#d7dacf"/>
<polygon points="1288.3,470.0 1293.3,468.3 1296.7,473.3 1300.0,466.7 1298.3,455.8 1306.7,456.7 1305.0,466.7 1310.0,465.0 1313.3,465.8 1316.7,468.3 1323.3,470.0 1330.0,470.8 1336.7,476.7 1330.0,481.7 1323.3,484.2 1310.0,481.7 1303.3,478.3 1293.3,478.3" fill="#8cf5c6"/>
<polygon points="1345.8,462.5 1350.8,462.5 1350.8,534.2 1345.8,534.2" fill="#d7dacf"/>
<circle cx="1346.7" cy="455.8" r="7.6" fill="#cc80fa"/>
<polygon points="1381.7,380.0 1425.0,379.0 1425.0,406.0 1382.0,406.7" fill="#cc80fa"/>
<polygon points="1412.5,445.8 1425.0,445.8 1425.0,458.3 1412.5,458.3" fill="#cc80fa"/>
<polygon points="1288.3,495.0 1296.7,490.0 1310.0,486.7 1311.7,481.7 1316.7,483.3 1320.0,493.3 1318.3,505.0 1313.3,511.7 1315.0,525.0 1315.0,546.7 1317.5,550.8 1307.5,550.0 1308.3,541.7 1306.7,516.7 1300.0,530.0 1293.3,543.3 1284.2,542.5 1286.7,530.0 1296.7,506.7 1295.0,500.0" fill="#c8184a"/>
<polygon points="1296.7,503.3 1303.3,500.0 1308.3,502.5 1313.3,503.3 1308.3,506.7 1305.0,518.3 1301.7,535.0 1298.3,548.3 1293.3,549.2 1290.0,540.0 1291.7,521.7" fill="#242480"/>
<polygon points="830.9,744.1 857.5,744.1 875.8,758.9 878.9,777.7 870.3,800.3 848.4,809.7 834.4,810.5 815.6,801.1 805.5,777.7 812.5,754.2" fill="#fe0000"/>
<path d="M292.6,861 L292.6,857.4 Q460,835 626.4,822.6 Q740,814 838.5,808.7 Q1000,813 1168.8,829.6 Q1290,843 1391.3,857.4 L1391.3,861 Z" fill="#fe0000"/>
</g><rect x="92.6" y="195.6" width="1330.8" height="663.8" fill="none" stroke="#83fe2a" stroke-width="3.2"/></svg>

</body></html>
